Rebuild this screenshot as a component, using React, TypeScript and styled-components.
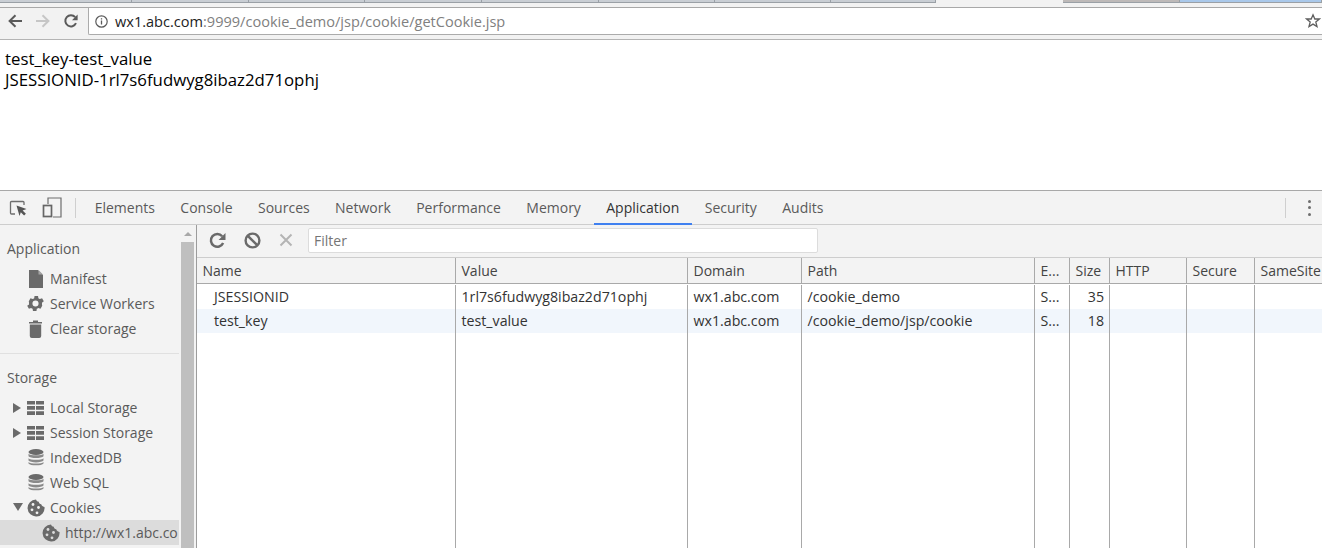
import React from 'react';
import styled, { createGlobalStyle } from 'styled-components';

const GlobalStyle = createGlobalStyle`
  html, body {
    margin: 0;
    padding: 0;
    background: #fff;
  }
`;

const tabWidths = [132, 117, 116, 117, 117, 116, 116, 105];

const panels = ['Elements', 'Console', 'Sources', 'Network', 'Performance', 'Memory', 'Application', 'Security', 'Audits'];

const columns = [
  { name: 'Name', w: 259 },
  { name: 'Value', w: 232 },
  { name: 'Domain', w: 114 },
  { name: 'Path', w: 233 },
  { name: 'E...', w: 35 },
  { name: 'Size', w: 40 },
  { name: 'HTTP', w: 77 },
  { name: 'Secure', w: 68 },
  { name: 'SameSite', w: 70 },
];

const rows = [
  ['JSESSIONID', '1rl7s6fudwyg8ibaz2d71ophj', 'wx1.abc.com', '/cookie_demo', 'S...', '35', '', '', ''],
  ['test_key', 'test_value', 'wx1.abc.com', '/cookie_demo/jsp/cookie', 'S...', '18', '', '', ''],
];

function App() {
  return (
    <Page>
      <GlobalStyle />
      <TabStrip>
        {tabWidths.map((w, i) => (
          <TabStub key={i} $w={w} $color="#c9ced4" />
        ))}
        <TabGap />
        <TabStub $w={117} $color="#bdb9b8" />
        <TabStub $w={142} $color="#a9c8ea" />
      </TabStrip>
      <Toolbar>
        <NavButton>
          <svg width="16" height="16" viewBox="0 0 16 16">
            <path d="M15 8H3M8.500 2.200 2.600 8l5.900 5.800" fill="none" stroke="#5a5a5a" strokeWidth="2" />
          </svg>
        </NavButton>
        <NavButton>
          <svg width="16" height="16" viewBox="0 0 16 16">
            <path d="M1 8h12M7.500 2.200 13.400 8l-5.900 5.800" fill="none" stroke="#c6c6c6" strokeWidth="2" />
          </svg>
        </NavButton>
        <NavButton>
          <svg width="16" height="16" viewBox="0 0 16 16">
            <path d="M13 10.200A5.600 5.600 0 1 1 12.200 4.200" fill="none" stroke="#5a5a5a" strokeWidth="2" />
            <path d="M14.600 1.600v5.600H9z" fill="#5a5a5a" />
          </svg>
        </NavButton>
        <AddressBar>
          <InfoIcon>
            <svg width="13" height="13" viewBox="0 0 13 13">
              <circle cx="6.500" cy="6.500" r="5.700" fill="none" stroke="#5a5a5a" strokeWidth="1.200" />
              <path d="M6.500 5.600v4M6.500 3.200v1.200" stroke="#5a5a5a" strokeWidth="1.300" />
            </svg>
          </InfoIcon>
          <Host>wx1.abc.com</Host>
          <UrlRest>:9999/cookie_demo/jsp/cookie/getCookie.jsp</UrlRest>
          <Star>
            <svg width="16" height="16" viewBox="0 0 16 16">
              <path d="M8 1.800 9.800 6h4.600l-3.600 3 1.200 4.600L8 11.100l-4 2.500L5.200 9 1.600 6h4.600z" fill="none" stroke="#5f5f5f" strokeWidth="1.300" />
            </svg>
          </Star>
        </AddressBar>
      </Toolbar>
      <Content>
        <div>test_key-test_value</div>
        <div>JSESSIONID-1rl7s6fudwyg8ibaz2d71ophj</div>
      </Content>
      <DevTools>
        <PanelBar>
          <ToolIcon>
            <svg width="18" height="18" viewBox="0 0 18 18">
              <path d="M6 15H2.500A1 1 0 0 1 1.500 14V3.500A1 1 0 0 1 2.500 2.500H14a1 1 0 0 1 1 1V6" fill="none" stroke="#6e6e6e" strokeWidth="1.300" />
              <path d="M7.500 6.500 17.500 10l-3.900 1.400 3.300 3.300-1.800 1.800-3.300-3.300L10.500 17z" fill="#555" />
            </svg>
          </ToolIcon>
          <ToolIcon>
            <svg width="20" height="21" viewBox="0 0 20 21">
              <path d="M6 7V1h13v19h-8" fill="none" stroke="#6e6e6e" strokeWidth="1.200" />
              <rect x="1.500" y="8.500" width="8" height="11" fill="none" stroke="#666" strokeWidth="1.700" />
            </svg>
          </ToolIcon>
          <BarDivider />
          {panels.map((p) => (
            <PanelTab key={p} $active={p === 'Application'}>
              {p}
            </PanelTab>
          ))}
          <BarSpacer />
          <BarDivider />
          <MoreDots>
            <i />
            <i />
            <i />
          </MoreDots>
        </PanelBar>
        <Split>
          <Sidebar>
            <SideList>
              <SideHeading>Application</SideHeading>
              <SideItem>
                <Slot>
                  <svg width="14" height="18" viewBox="0 0 14 18">
                    <path d="M0 0h9l5 5v13H0z" fill="#6a6a6a" />
                    <path d="M9.500 0v4.500H14z" fill="#a5a5a5" />
                  </svg>
                </Slot>
                Manifest
              </SideItem>
              <SideItem>
                <Slot>
                  <svg width="21" height="21" viewBox="0 0 24 24">
                    <path
                      fill="#6a6a6a"
                      d="M19.400 13a7.700 7.700 0 0 0 0-2l2.100-1.600-2-3.500-2.500 1a7.500 7.500 0 0 0-1.700-1l-.4-2.600h-4l-.4 2.600a7.500 7.500 0 0 0-1.700 1l-2.500-1-2 3.500L4.600 11a7.700 7.700 0 0 0 0 2l-2.100 1.600 2 3.500 2.500-1a7.500 7.500 0 0 0 1.700 1l.4 2.600h4l.4-2.600a7.500 7.500 0 0 0 1.700-1l2.500 1 2-3.500zM12 15.500a3.500 3.500 0 1 1 0-7 3.500 3.500 0 0 1 0 7z"
                    />
                  </svg>
                </Slot>
                Service Workers
              </SideItem>
              <SideItem>
                <Slot>
                  <svg width="15" height="18" viewBox="0 0 15 18">
                    <path d="M1 2h13v1.600H1zM5 .6h5V2H5zM1.800 4.500h11.400V16a2 2 0 0 1-2 2H3.800a2 2 0 0 1-2-2z" fill="#6a6a6a" />
                  </svg>
                </Slot>
                Clear storage
              </SideItem>
              <SideRule />
              <StorageHeading>Storage</StorageHeading>
              <SideItem>
                <Caret $open={false} />
                <Slot>
                  <GridIcon />
                </Slot>
                Local Storage
              </SideItem>
              <SideItem>
                <Caret $open={false} />
                <Slot>
                  <GridIcon />
                </Slot>
                Session Storage
              </SideItem>
              <SideItem>
                <Slot>
                  <DbIcon />
                </Slot>
                IndexedDB
              </SideItem>
              <SideItem>
                <Slot>
                  <DbIcon />
                </Slot>
                Web SQL
              </SideItem>
              <SideItem>
                <Caret $open />
                <Slot>
                  <CookieIcon bg="#f3f3f3" />
                </Slot>
                Cookies
              </SideItem>
              <SideItem $selected $nested>
                <Slot>
                  <CookieIcon bg="#dcdcdc" />
                </Slot>
                http://wx1.abc.co
              </SideItem>
            </SideList>
            <SideScroll>
              <ScrollArrow />
              <ScrollThumb />
            </SideScroll>
          </Sidebar>
          <Main>
            <FilterBar>
              <FilterButton $w={35}>
                <svg width="17" height="17" viewBox="0 0 16 16">
                  <path d="M13.300 10.300A6 6 0 1 1 12.400 4" fill="none" stroke="#6a6a6a" strokeWidth="2.300" />
                  <path d="M15.500 1v6.500H9z" fill="#6a6a6a" />
                </svg>
              </FilterButton>
              <FilterButton $w={35}>
                <svg width="17" height="17" viewBox="0 0 17 17">
                  <circle cx="8.500" cy="8.500" r="6.900" fill="none" stroke="#6a6a6a" strokeWidth="2.400" />
                  <path d="M3.800 3.800l9.400 9.400" stroke="#6a6a6a" strokeWidth="2.400" />
                </svg>
              </FilterButton>
              <FilterButton $w={28}>
                <svg width="14" height="14" viewBox="0 0 14 14">
                  <path d="M1.500 1.500l11 11M12.500 1.500l-11 11" stroke="#b4b4b4" strokeWidth="2" />
                </svg>
              </FilterButton>
              <FilterInput>Filter</FilterInput>
            </FilterBar>
            <Table>
              <HeaderRow>
                {columns.map((c) => (
                  <HeaderCell key={c.name} $w={c.w}>
                    {c.name}
                  </HeaderCell>
                ))}
              </HeaderRow>
              {rows.map((r, ri) => (
                <DataRow key={ri} $alt={ri === 1}>
                  {r.map((v, ci) => (
                    <DataCell key={ci} $w={columns[ci].w} $indent={ci === 0} $right={ci === 5}>
                      {v}
                    </DataCell>
                  ))}
                </DataRow>
              ))}
              <FillerRow>
                {columns.map((c) => (
                  <FillerCell key={c.name} $w={c.w} />
                ))}
              </FillerRow>
            </Table>
          </Main>
        </Split>
      </DevTools>
    </Page>
  );
}

function GridIcon() {
  return (
    <svg width="17" height="14" viewBox="0 0 17 14">
      <path d="M0 0h8v3.500H0zM9 0h8v3.500H9zM0 5h8v3.800H0zM9 5h8v3.800H9zM0 10.200h8V14H0zM9 10.200h8V14H9z" fill="#6a6a6a" />
    </svg>
  );
}

function DbIcon() {
  return (
    <svg width="16" height="17" viewBox="0 0 16 17">
      <ellipse cx="8" cy="3" rx="7.500" ry="3" fill="#6a6a6a" />
      <path d="M.5 4.800c1.500 2 13.500 2 15 0v2.400c-1.500 2.400-13.500 2.400-15 0zM.5 9.200c1.500 2 13.500 2 15 0v2.400c-1.500 2.400-13.500 2.400-15 0zM.5 13c1.500 2 13.500 2 15 0v1.400C14 17 2 17 .5 14.400z" fill="#8a8a8a" />
    </svg>
  );
}

function CookieIcon({ bg }: { bg: string }) {
  return (
    <svg width="18" height="18" viewBox="0 0 18 18">
      <path d="M9 .5c.6 1.500 1.500 2.200 2.800 2.200.1 1.500 1 2.500 2.500 2.600 0 1 1 2.200 3.200 2.700A8.500 8.500 0 1 1 9 .5z" fill="#6a6a6a" />
      <circle cx="6" cy="5.500" r="1.400" fill={bg} />
      <circle cx="11.500" cy="8.500" r="1.400" fill={bg} />
      <circle cx="5" cy="10.800" r="1.400" fill={bg} />
      <circle cx="10" cy="13.800" r="1.400" fill={bg} />
    </svg>
  );
}

export default App;

const Page = styled.div`
  width: 1322px;
  height: 548px;
  overflow: hidden;
  display: flex;
  flex-direction: column;
  font-family: 'Open Sans', 'Noto Sans', sans-serif;
`;

const TabStrip = styled.div`
  height: 7px;
  display: flex;
  background: #f2f2f2;
  border-bottom: 1px solid #a8a8a8;
`;

const TabStub = styled.div<{ $w: number; $color: string }>`
  flex: 0 0 ${(p) => p.$w}px;
  box-sizing: border-box;
  height: 3px;
  background: ${(p) => p.$color};
  border-right: 1px solid #9aa0a6;
  border-bottom: 1px solid #9aa0a6;
`;

const TabGap = styled.div`
  flex: 0 0 127px;
`;

const Toolbar = styled.div`
  height: 26px;
  padding: 0 0 5px 1px;
  display: flex;
  align-items: center;
  background: #f2f2f2;
  border-bottom: 1px solid #b4b4b4;
`;

const NavButton = styled.div`
  flex: 0 0 28px;
  display: flex;
  justify-content: center;
  align-items: center;
`;

const AddressBar = styled.div`
  flex: 1;
  align-self: flex-start;
  height: 27px;
  box-sizing: border-box;
  margin-left: 3px;
  display: flex;
  align-items: center;
  background: #fff;
  border: 1px solid #ababab;
  border-width: 0 0 1px 1px;
  border-radius: 0 0 0 2px;
  font-size: 14.550px;
`;

const InfoIcon = styled.span`
  display: flex;
  margin: 0 7px 0 6px;
`;

const Host = styled.span`
  color: #222;
`;

const UrlRest = styled.span`
  color: #808080;
`;

const Star = styled.span`
  margin-left: auto;
  margin-right: 1px;
  display: flex;
`;

const Content = styled.div`
  height: 150px;
  box-sizing: border-box;
  padding: 8px 5px 0;
  background: #fff;
  font-size: 16.800px;
  line-height: 21px;
  color: #000;
`;

const DevTools = styled.div`
  flex: 1;
  min-height: 0;
  display: flex;
  flex-direction: column;
  border-top: 1px solid #a8a8a8;
  font-size: 14px;
  color: #5a5a5a;
`;

const PanelBar = styled.div`
  flex: 0 0 33px;
  display: flex;
  align-items: center;
  background: #f3f3f3;
  border-bottom: 1px solid #cdcdcd;
  padding-left: 9px;
`;

const ToolIcon = styled.div`
  flex: 0 0 33px;
  display: flex;
  align-items: center;
`;

const BarDivider = styled.div`
  width: 1px;
  height: 20px;
  background: #cfcfcf;
`;

const BarSpacer = styled.div`
  flex: 1;
`;

const PanelTab = styled.div<{ $active: boolean }>`
  height: 33px;
  box-sizing: border-box;
  padding: 0 12.700px;
  display: flex;
  align-items: center;
  color: ${(p) => (p.$active ? '#333' : '#5a5a5a')};
  border-bottom: 2px solid ${(p) => (p.$active ? '#3f80f0' : 'transparent')};
  margin-bottom: -1px;
  &:nth-child(4) {
    margin-left: 6px;
  }
`;

const MoreDots = styled.div`
  flex: 0 0 36px;
  box-sizing: border-box;
  padding-left: 10px;
  display: flex;
  flex-direction: column;
  align-items: center;
  gap: 3.500px;
  i {
    width: 3px;
    height: 3px;
    border-radius: 50%;
    background: #6e6e6e;
  }
`;

const Split = styled.div`
  flex: 1;
  min-height: 0;
  display: flex;
`;

const Sidebar = styled.div`
  flex: 0 0 197px;
  box-sizing: border-box;
  display: flex;
  background: #f3f3f3;
  border-right: 1px solid #9c9c9c;
`;

const SideList = styled.div`
  flex: 0 0 179px;
  min-width: 0;
  overflow: hidden;
  padding-top: 11px;
`;

const SideHeading = styled.div`
  height: 25px;
  line-height: 25px;
  padding-left: 7px;
  margin-bottom: 5px;
`;

const StorageHeading = styled(SideHeading)`
  margin-top: 11px;
`;

const SideItem = styled.div<{ $selected?: boolean; $nested?: boolean }>`
  position: relative;
  height: 25px;
  display: flex;
  align-items: center;
  white-space: nowrap;
  padding-left: ${(p) => (p.$nested ? 36 : 21)}px;
  background: ${(p) => (p.$selected ? '#dcdcdc' : 'transparent')};
`;

const Slot = styled.span`
  flex: 0 0 29px;
  display: flex;
  justify-content: center;
`;

const Caret = styled.span<{ $open: boolean }>`
  position: absolute;
  left: 13px;
  top: 8px;
  width: 0;
  height: 0;
  ${(p) =>
    p.$open
      ? `border-left: 5px solid transparent; border-right: 5px solid transparent; border-top: 8px solid #6a6a6a;`
      : `border-top: 5px solid transparent; border-bottom: 5px solid transparent; border-left: 8px solid #6a6a6a;`}
`;

const SideRule = styled.div`
  height: 1px;
  background: #e0e0e0;
  margin-top: 12px;
`;

const SideScroll = styled.div`
  flex: 0 0 13px;
  margin-left: 2px;
  display: flex;
  flex-direction: column;
  align-items: stretch;
`;

const ScrollArrow = styled.div`
  flex: 0 0 17px;
  position: relative;
  &::after {
    content: '';
    position: absolute;
    left: 3px;
    top: 7px;
    border-left: 4px solid transparent;
    border-right: 4px solid transparent;
    border-bottom: 4px solid #a8a8a8;
  }
`;

const ScrollThumb = styled.div`
  flex: 1;
  background: #bfbfbf;
`;

const Main = styled.div`
  flex: 1;
  min-width: 0;
  display: flex;
  flex-direction: column;
  background: #fff;
`;

const FilterBar = styled.div`
  flex: 0 0 33px;
  box-sizing: border-box;
  display: flex;
  align-items: center;
  background: #f3f3f3;
  padding: 0 0 2px 12px;
  border-bottom: 1px solid #cdcdcd;
`;

const FilterButton = styled.div<{ $w: number }>`
  flex: 0 0 ${(p) => p.$w}px;
  display: flex;
  align-items: center;
`;

const FilterInput = styled.div`
  width: 510px;
  height: 25px;
  margin-left: 1px;
  box-sizing: border-box;
  padding-left: 5px;
  line-height: 24px;
  background: #fff;
  border: 1px solid #dcdcdc;
  border-radius: 2px;
  color: #757575;
`;

const Table = styled.div`
  flex: 1;
  min-height: 0;
  display: flex;
  flex-direction: column;
  overflow: hidden;
`;

const HeaderRow = styled.div`
  flex: 0 0 26px;
  display: flex;
  background: #f3f3f3;
  border-bottom: 1px solid #a9a9a9;
  box-sizing: border-box;
  margin-bottom: 1px;
`;

const HeaderCell = styled.div<{ $w: number }>`
  flex: 0 0 ${(p) => p.$w}px;
  box-sizing: border-box;
  padding-left: 5.500px;
  line-height: 25px;
  white-space: nowrap;
  overflow: hidden;
  border-right: 1px solid #a9a9a9;
  color: #444;
`;

const DataRow = styled.div<{ $alt: boolean }>`
  flex: 0 0 24px;
  display: flex;
  background: ${(p) => (p.$alt ? '#f1f6fc' : '#fff')};
`;

const DataCell = styled.div<{ $w: number; $indent: boolean; $right: boolean }>`
  flex: 0 0 ${(p) => p.$w}px;
  box-sizing: border-box;
  padding: 0 5px 0 ${(p) => (p.$indent ? 17 : 5.500)}px;
  font-size: 14.200px;
  line-height: 24px;
  white-space: nowrap;
  overflow: hidden;
  text-align: ${(p) => (p.$right ? 'right' : 'left')};
  border-right: 1px solid #a9a9a9;
  color: #333;
`;

const FillerRow = styled.div`
  flex: 1;
  display: flex;
`;

const FillerCell = styled.div<{ $w: number }>`
  flex: 0 0 ${(p) => p.$w}px;
  box-sizing: border-box;
  border-right: 1px solid #a9a9a9;
`;
